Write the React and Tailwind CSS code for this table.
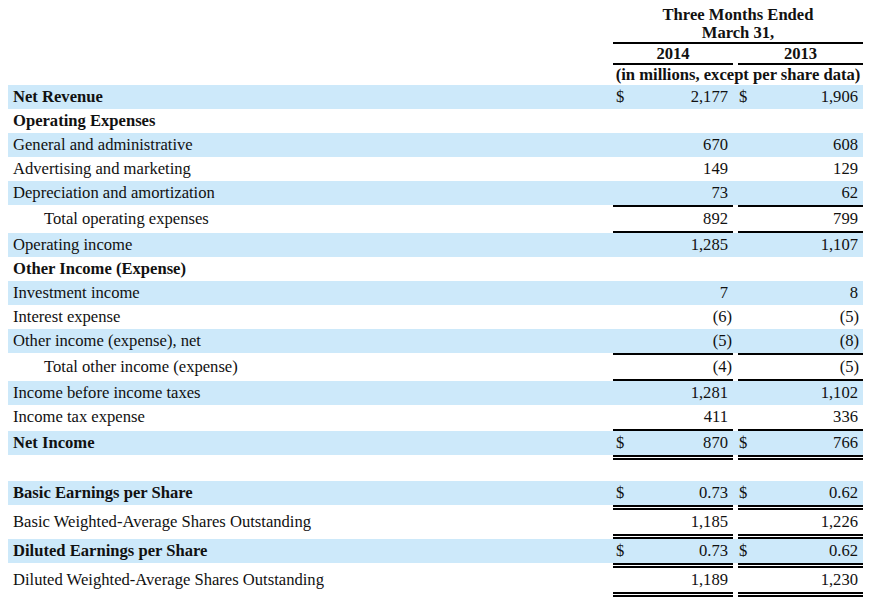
import React from "react";

const GRID = "grid grid-cols-[605px_120px_5px_125px]";

const data = [
  { t: "row", label: "Net Revenue", bold: true, blue: true, dollar: true, a: "2,177", b: "1,906" },
  { t: "row", label: "Operating Expenses", bold: true },
  { t: "row", label: "General and administrative", blue: true, a: "670", b: "608" },
  { t: "row", label: "Advertising and marketing", a: "149", b: "129" },
  { t: "row", label: "Depreciation and amortization", blue: true, a: "73", b: "62" },
  { t: "rule" },
  { t: "row", label: "Total operating expenses", indent: true, a: "892", b: "799" },
  { t: "rule" },
  { t: "row", label: "Operating income", blue: true, a: "1,285", b: "1,107" },
  { t: "row", label: "Other Income (Expense)", bold: true },
  { t: "row", label: "Investment income", blue: true, a: "7", b: "8" },
  { t: "row", label: "Interest expense", a: "(6)", b: "(5)" },
  { t: "row", label: "Other income (expense), net", blue: true, a: "(5)", b: "(8)" },
  { t: "rule" },
  { t: "row", label: "Total other income (expense)", indent: true, a: "(4)", b: "(5)" },
  { t: "rule" },
  { t: "row", label: "Income before income taxes", blue: true, a: "1,281", b: "1,102" },
  { t: "row", label: "Income tax expense", a: "411", b: "336" },
  { t: "rule" },
  { t: "row", label: "Net Income", bold: true, blue: true, dollar: true, a: "870", b: "766" },
  { t: "double" },
  { t: "spacer" },
  { t: "row", label: "Basic Earnings per Share", bold: true, blue: true, dollar: true, a: "0.73", b: "0.62" },
  { t: "double" },
  { t: "row", label: "Basic Weighted-Average Shares Outstanding", a: "1,185", b: "1,226" },
  { t: "double" },
  { t: "row", label: "Diluted Earnings per Share", bold: true, blue: true, dollar: true, a: "0.73", b: "0.62" },
  { t: "double" },
  { t: "row", label: "Diluted Weighted-Average Shares Outstanding", a: "1,189", b: "1,230" },
  { t: "double" },
];

function Rule() {
  return (
    <div className={GRID + " h-[2px]"}>
      <div />
      <div className="bg-black" />
      <div />
      <div className="bg-black" />
    </div>
  );
}

function DoubleRule() {
  return (
    <div className={GRID + " h-[5px]"}>
      <div />
      <div className="flex flex-col justify-between">
        <div className="h-[2px] bg-black" />
        <div className="h-[2px] bg-black" />
      </div>
      <div />
      <div className="flex flex-col justify-between">
        <div className="h-[2px] bg-black" />
        <div className="h-[2px] bg-black" />
      </div>
    </div>
  );
}

function Row({ r }) {
  const parA = r.a && r.a.startsWith("(");
  const parB = r.b && r.b.startsWith("(");
  return (
    <div className={GRID + " h-[24px] leading-[24px] " + (r.blue ? "bg-[#cde9fa]" : "")}>
      <div className={(r.indent ? "pl-[36px] " : "pl-[5px] ") + (r.bold ? "font-bold" : "") + " whitespace-nowrap"}>
        {r.label}
      </div>
      <div className="flex justify-between">
        <span className="pl-[3px]">{r.dollar ? "$" : ""}</span>
        <span className={parA ? "pr-[1px]" : "pr-[5px]"}>{r.a}</span>
      </div>
      <div />
      <div className="flex justify-between">
        <span className="pl-[1px]">{r.dollar ? "$" : ""}</span>
        <span className={parB ? "pr-[4px]" : "pr-[5px]"}>{r.b}</span>
      </div>
    </div>
  );
}

export default function App() {
  return (
    <div className="w-[873px] h-[610px] bg-white text-[#111] font-['Liberation_Serif',serif] text-[16.6px] overflow-hidden">
      <div className="ml-[8px] w-[855px]">
        <div className={GRID + " pt-[6px]"}>
          <div />
          <div className="col-span-3 text-center font-bold leading-[18px]">
            Three Months Ended
            <br />
            March 31,
          </div>
        </div>
        <div className={GRID + " h-[2px]"}>
          <div />
          <div className="col-span-3 bg-black" />
        </div>
        <div className={GRID + " leading-[19px] font-bold"}>
          <div />
          <div className="text-center">2014</div>
          <div />
          <div className="text-center">2013</div>
        </div>
        <Rule />
        <div className={GRID + " leading-[20px] font-bold"}>
          <div />
          <div className="col-span-3 text-center whitespace-nowrap">(in millions, except per share data)</div>
        </div>
        {data.map((r, i) => {
          if (r.t === "rule") return <Rule key={i} />;
          if (r.t === "double") return <DoubleRule key={i} />;
          if (r.t === "spacer") return <div key={i} className="h-[21px]" />;
          return <Row key={i} r={r} />;
        })}
      </div>
    </div>
  );
}
